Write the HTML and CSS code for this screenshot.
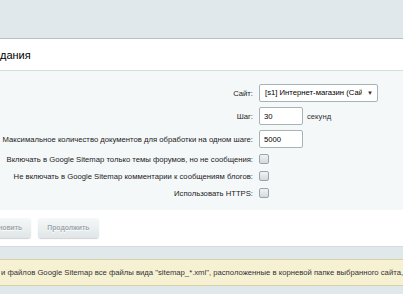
FILE: index.html
```html
<!DOCTYPE html>
<html>
<head>
    <meta charset="UTF-8">
    <title>Google Sitemap</title>
    <link rel="stylesheet" href="styles.css">
</head>
<body>
<div class="top"></div>

<section class="panel">
    <div class="panel-title">дания</div>

    <div class="form">
        <label class="lbl">Сайт:</label>
        <div class="fld">
            <div class="select">
                <span>[s1] Интернет-магазин (Сайт по умолчанию)</span>
                <em class="arrow">&#9660;</em>
            </div>
        </div>

        <label class="lbl">Шаг:</label>
        <div class="fld">
            <input type="text" class="txt" value="30"/>
            <span class="unit">секунд</span>
        </div>

        <label class="lbl">Максимальное количество документов для обработки на одном шаге:</label>
        <div class="fld">
            <input type="text" class="txt" value="5000"/>
        </div>

        <label class="lbl chk-lbl">Включать в Google Sitemap только темы форумов, но не сообщения:</label>
        <div class="fld chk-fld"><input type="checkbox" class="chk"/></div>

        <label class="lbl chk-lbl">Не включать в Google Sitemap комментарии к сообщениям блогов:</label>
        <div class="fld chk-fld"><input type="checkbox" class="chk"/></div>

        <label class="lbl chk-lbl">Использовать HTTPS:</label>
        <div class="fld chk-fld"><input type="checkbox" class="chk"/></div>
    </div>

    <div class="buttons">
        <div class="btn btn-first">Остановить</div>
        <div class="btn">Продолжить</div>
    </div>
</section>

<div class="note">
    <span>и файлов Google Sitemap все файлы вида "sitemap_*.xml", расположенные в корневой папке выбранного сайта, будут удалены.</span>
</div>
</body>
</html>
```

FILE: styles.css
```css
* {
    margin: 0;
    padding: 0;
    box-sizing: border-box;
}

html, body {
    width: 100%;
    height: 100%;
    overflow: hidden;
}

body {
    background: #e1e8eb;
    font-family: "Liberation Sans", Arial, sans-serif;
    font-size: 7.7px;
    color: #000;
}

.top {
    height: 38px;
}

.panel {
    border-top: 1px solid #b7c2c6;
    background: #fff;
}

.panel-title {
    height: 32px;
    line-height: 32px;
    font-size: 11px;
    color: #000;
    border-bottom: 1px solid #d6dddf;
}

.form {
    display: grid;
    grid-template-columns: 253px 1fr;
    column-gap: 6px;
    row-gap: 5px;
    align-items: center;
    padding: 13px 0 11px;
    background: #f5f8f9;
}

.lbl {
    text-align: right;
    white-space: nowrap;
    color: #222;
}

.fld {
    display: flex;
    align-items: center;
    height: 18px;
}

.chk-fld {
    height: 12px;
}

.select {
    position: relative;
    width: 119px;
    height: 18px;
    line-height: 16px;
    padding: 0 15px 0 5px;
    border: 1px solid #a8b3b8;
    border-radius: 2px;
    background: #fff;
    white-space: nowrap;
    color: #000;
}

.select span {
    display: block;
    overflow: hidden;
}

.arrow {
    position: absolute;
    right: 1px;
    top: 0;
    width: 12px;
    text-align: center;
    font-style: normal;
    font-size: 6px;
    color: #333;
}

.txt {
    display: block;
    width: 44px;
    height: 18px;
    padding: 0 4px;
    border: 1px solid #a8b3b8;
    border-radius: 2px;
    background: #fff;
    font-family: inherit;
    font-size: 7.7px;
    color: #000;
    outline: none;
}

.unit {
    margin-left: 4px;
    color: #333;
}

.chk {
    -webkit-appearance: none;
    appearance: none;
    display: block;
    width: 10px;
    height: 10px;
    border: 1px solid #9aa5ab;
    border-radius: 2px;
    background: linear-gradient(#f1f3f4, #d3d9dc);
}

.buttons {
    display: flex;
    gap: 7px;
    padding: 7px 0 8px;
    background: #fff;
    border-bottom: 1px solid #d3dbde;
}

.btn {
    height: 21px;
    line-height: 21px;
    padding: 0 9px;
    border-radius: 3px;
    background: linear-gradient(#f7f9f9, #dfe6e8);
    box-shadow: 0 1px 1px rgba(0, 0, 0, 0.18), inset 0 1px 0 #fff;
    font-size: 6.8px;
    font-weight: bold;
    color: #9ea8ac;
    text-shadow: 0 1px 0 #fff;
}

.btn-first {
    margin-left: -27px;
}

.note {
    margin-top: 12px;
    height: 27px;
    line-height: 25px;
    padding-left: 1px;
    border-top: 1px solid #d9d1a3;
    border-bottom: 1px solid #d9d1a3;
    background: #f6f1d3;
    white-space: nowrap;
    overflow: hidden;
    color: #333;
}
```
